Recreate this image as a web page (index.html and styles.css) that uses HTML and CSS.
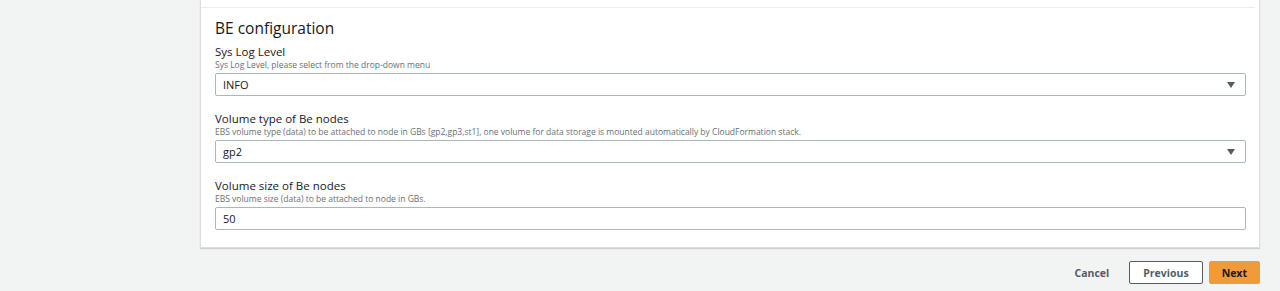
FILE: index.html
```html
<!DOCTYPE html>
<html lang="en">
<head>
  <meta charset="UTF-8">
  <title>Specify stack details</title>
  <link rel="stylesheet" href="styles.css">
</head>
<body>
  <div class="page">
    <div class="panel">
      <div class="panel-prev"></div>
      <div class="panel-body">
        <h2>BE configuration</h2>

        <div class="field">
          <label for="sysLogLevel">Sys Log Level</label>
          <div class="hint">Sys Log Level, please select from the drop-down menu</div>
          <div class="select-box" id="sysLogLevel">
            <span>INFO</span>
            <span class="caret"></span>
          </div>
        </div>

        <div class="field">
          <label for="volumeType">Volume type of Be nodes</label>
          <div class="hint">EBS volume type (data) to be attached to node in GBs [gp2,gp3,st1], one volume for data storage is mounted automatically by CloudFormation stack.</div>
          <div class="select-box" id="volumeType">
            <span>gp2</span>
            <span class="caret"></span>
          </div>
        </div>

        <div class="field">
          <label for="volumeSize">Volume size of Be nodes</label>
          <div class="hint">EBS volume size (data) to be attached to node in GBs.</div>
          <input type="text" id="volumeSize" class="text-input" value="50">
        </div>
      </div>
    </div>

    <div class="actions">
      <button class="btn-link">Cancel</button>
      <button class="btn-normal">Previous</button>
      <button class="btn-primary">Next</button>
    </div>
  </div>
</body>
</html>
```

FILE: styles.css
```css
body {
  margin: 0;
  padding: 0;
  background-color: #f2f3f3;
  font-family: 'Open Sans', 'Noto Sans', sans-serif;
  color: #16191f;
}

.page {
  margin: 0 20px 0 200px;
}

.panel {
  background: #ffffff;
  border: 1px solid #dcdfe0;
  border-top: none;
  box-shadow: 0 1px 1px rgba(0, 0, 0, 0.15);
}

.panel-prev {
  height: 7px;
  border-bottom: 1px solid #eaeded;
  margin-right: 4px;
}

.panel-body {
  padding: 10px 13px 17px 14px;
}

.panel-body h2 {
  font-size: 15.5px;
  font-weight: 400;
  margin: 0 0 7px 0;
  line-height: 20px;
}

.field {
  margin-bottom: 16px;
}

.field:last-child {
  margin-bottom: 0;
}

.field label {
  display: block;
  font-size: 11.5px;
  font-weight: 500;
  line-height: 14px;
}

.hint {
  font-size: 8.5px;
  color: #687078;
  line-height: 12px;
  margin-bottom: 2px;
}

.select-box,
.text-input {
  box-sizing: border-box;
  width: 100%;
  height: 23px;
  border: 1px solid #aab7b8;
  border-radius: 2px;
  background: #ffffff;
  font-family: inherit;
  font-size: 11px;
  color: #16191f;
  padding: 0 10px 0 7px;
}

.select-box {
  display: flex;
  align-items: center;
  justify-content: space-between;
}

.caret {
  width: 0;
  height: 0;
  border-left: 4px solid transparent;
  border-right: 4px solid transparent;
  border-top: 6px solid #545b64;
}

.text-input {
  display: block;
  outline: none;
}

.actions {
  display: flex;
  justify-content: flex-end;
  align-items: center;
  gap: 6px;
  margin-top: 13px;
}

.actions button {
  font-family: inherit;
  font-size: 10.5px;
  font-weight: 700;
  height: 23px;
  border-radius: 2px;
  cursor: pointer;
}

.btn-link {
  background: none;
  border: none;
  color: #545b64;
  padding: 0 14px;
}

.btn-normal {
  background: #ffffff;
  border: 1px solid #545b64;
  color: #545b64;
  padding: 0 13px;
}

.btn-primary {
  background: #f09b38;
  border: 1px solid #f09b38;
  color: #16191f;
  padding: 0 12px;
}
```
